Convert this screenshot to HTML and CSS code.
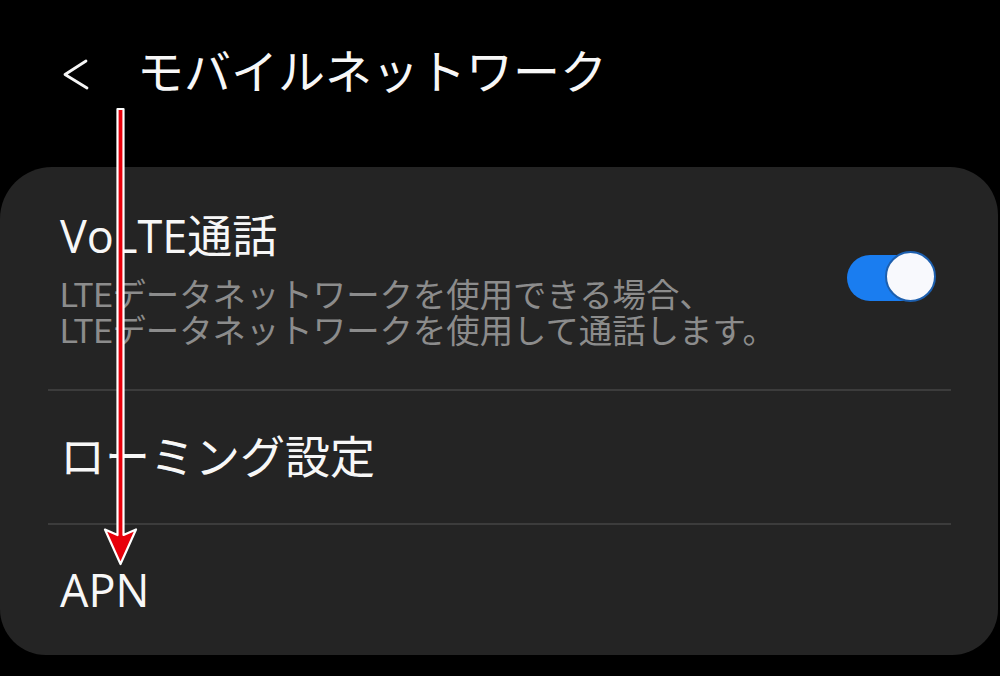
FILE: index.html
```html
<!DOCTYPE html>
<html lang="ja">
<head>
<meta charset="utf-8">
<link rel="stylesheet" href="styles.css">
</head>
<body>
<div class="screen">
  <header class="header">
    <svg class="back" width="40" height="40" viewBox="0 0 40 40">
      <polyline points="30,6 9,19.5 31,33" fill="none" stroke="#f5f5f5" stroke-width="2.8" stroke-linecap="round" stroke-linejoin="round"/>
    </svg>
    <h1 class="title">モバイルネットワーク</h1>
  </header>
  <section class="card">
    <div class="row row-volte">
      <div class="text">
        <div class="label">VoLTE通話</div>
        <div class="sub">LTEデータネットワークを使用できる場合、<br>LTEデータネットワークを使用して通話します。</div>
      </div>
      <div class="switch"><span class="thumb"></span></div>
    </div>
    <div class="divider"></div>
    <div class="row row-roam"><div class="label">ローミング設定</div></div>
    <div class="divider"></div>
    <div class="row row-apn"><div class="label">APN</div></div>
  </section>
  <svg class="overlay" width="1000" height="676" viewBox="0 0 1000 676">
    <polygon points="117.5,109 123.5,109 123.5,535 136,529.5 120.5,564 105,529.5 117.5,535" fill="#e8000b" stroke="#ffffff" stroke-width="2.2" stroke-linejoin="round"/>
  </svg>
</div>
</body>
</html>
```
FILE: styles.css
```css
html, body {
  margin: 0;
  padding: 0;
  background: #000;
}
body {
  font-family: Roboto, "Noto Sans CJK JP", sans-serif;
  color: #f7f7f7;
}
.screen {
  position: relative;
  width: 1000px;
  height: 676px;
  overflow: hidden;
  background: #000;
}
.header {
  height: 167px;
  display: flex;
  align-items: flex-start;
  padding-left: 56px;
  box-sizing: border-box;
}
.back {
  margin-top: 55px;
  flex: none;
}
.title {
  margin: 49px 0 0 41px;
  font-size: 47px;
  line-height: 47px;
  font-weight: 400;
  letter-spacing: 0;
  color: #f7f7f7;
}
.card {
  width: 998px;
  height: 488px;
  background: #242424;
  border-radius: 52px 48px 46px 46px;
  box-sizing: border-box;
}
.row {
  display: flex;
  align-items: center;
  padding: 0 64px 0 60px;
}
.row-volte {
  height: 222px;
  align-items: flex-start;
}
.text {
  flex: 1;
  padding-top: 43px;
}
.label {
  font-family: "Open Sans", "Noto Sans CJK JP", sans-serif;
  font-size: 45px;
  line-height: 52px;
  color: #f7f7f7;
}
.sub {
  margin-top: 16px;
  font-size: 33.4px;
  line-height: 36px;
  color: #8c8c8c;
}
.switch {
  position: relative;
  margin-top: 88px;
  width: 86px;
  height: 46px;
  border-radius: 23px;
  background: #1a7df0;
  flex: none;
  margin-right: 1px;
}
.thumb {
  position: absolute;
  right: -3px;
  top: -4px;
  width: 47px;
  height: 47px;
  border-radius: 50%;
  background: #f8f9fd;
  border: 2px solid #1d5fae;
}
.divider {
  height: 2px;
  margin: 0 47px 0 48px;
  background: #3c3c3c;
}
.row-roam {
  height: 132px;
}
.row-apn {
  height: 130px;
}
.overlay {
  position: absolute;
  left: 0;
  top: 0;
}
```
